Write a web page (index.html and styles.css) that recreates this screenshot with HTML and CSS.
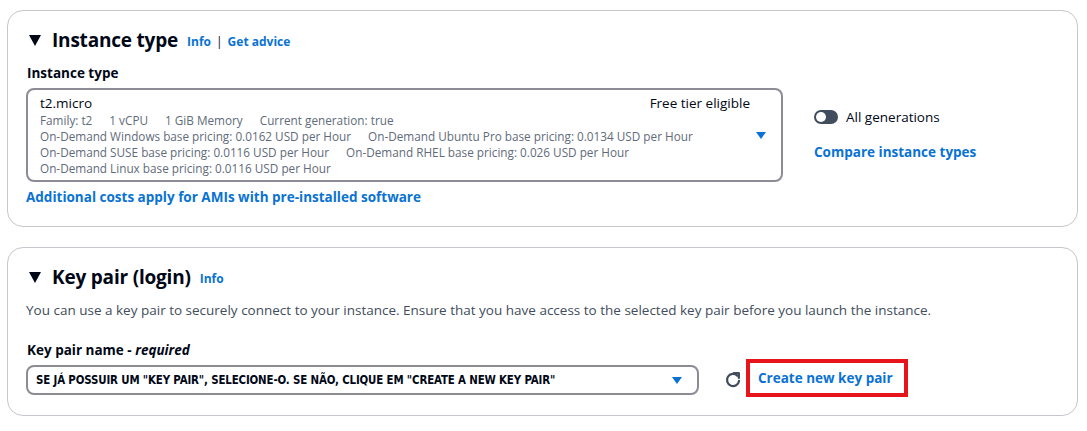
FILE: index.html
```html
<!DOCTYPE html>
<html>
<head>
<meta charset="utf-8">
<link rel="stylesheet" href="styles.css">
</head>
<body>
<section class="card card-first">
  <div class="head">
    <span class="tri"></span>
    <h2 class="title">Instance type</h2>
    <span class="links"><a class="info">Info</a><span class="sep">|</span><a class="info">Get advice</a></span>
  </div>
  <div class="label">Instance type</div>
  <div class="row-top">
    <div class="select big">
      <div class="sel-main">
        <div class="line1"><span>t2.micro</span><span class="free">Free tier eligible</span></div>
        <div class="sub"><span>Family: t2</span><span>1 vCPU</span><span>1 GiB Memory</span><span>Current generation: true</span></div>
        <div class="sub"><span>On-Demand Windows base pricing: 0.0162 USD per Hour</span><span>On-Demand Ubuntu Pro base pricing: 0.0134 USD per Hour</span></div>
        <div class="sub"><span>On-Demand SUSE base pricing: 0.0116 USD per Hour</span><span>On-Demand RHEL base pricing: 0.026 USD per Hour</span></div>
        <div class="sub"><span>On-Demand Linux base pricing: 0.0116 USD per Hour</span></div>
      </div>
      <span class="caret"></span>
    </div>
    <div class="side">
      <div class="toggle-row"><span class="toggle"><span class="knob"></span></span><span>All generations</span></div>
      <a class="link">Compare instance types</a>
    </div>
  </div>
  <a class="link extra">Additional costs apply for AMIs with pre-installed software</a>
</section>

<section class="card card-second">
  <div class="head">
    <span class="tri"></span>
    <h2 class="title">Key pair (login)</h2>
    <span class="links"><a class="info">Info</a></span>
  </div>
  <p class="desc">You can use a key pair to securely connect to your instance. Ensure that you have access to the selected key pair before you launch the instance.</p>
  <div class="label label2">Key pair name - <i>required</i></div>
  <div class="row-key">
    <div class="select small">
      <span class="sel-text">SE JÁ POSSUIR UM "KEY PAIR", SELECIONE-O. SE NÃO, CLIQUE EM "CREATE A NEW KEY PAIR"</span>
      <span class="caret"></span>
    </div>
    <svg class="refresh" width="18" height="18" viewBox="0 0 16 16"><path d="M13.4 8.8A5.4 5.4 0 1 1 11.8 4.1" fill="none" stroke="#414d5c" stroke-width="2" stroke-linecap="round"/><path d="M8.8 1.8 L13.2 1.8 L13.2 6.2" fill="none" stroke="#414d5c" stroke-width="2" stroke-linejoin="round" stroke-linecap="round"/></svg>
    <a class="link create">Create new key pair</a>
  </div>
</section>
</body>
</html>
```

FILE: styles.css
```css
* { box-sizing: border-box; }
body {
  margin: 0;
  padding: 10px 9px 0 7px;
  background: #ffffff;
  font-family: "Open Sans", "Noto Sans", sans-serif;
  color: #000716;
}
.card {
  border: 1px solid #c6c6cd;
  border-radius: 16px;
  padding: 19px 20px 19px 19px;
  background: #fff;
}
.card-second { margin-top: 20px; padding-bottom: 18px; }
.head {
  display: flex;
  align-items: center;
  height: 20px;
}
.tri {
  width: 0; height: 0;
  margin-left: 2px;
  border-left: 6.5px solid transparent;
  border-right: 6.5px solid transparent;
  border-top: 11px solid #000716;
}
.title {
  margin: 0 0 0 11px;
  font-size: 19px;
  font-weight: 700;
  line-height: 20px;
  letter-spacing: -0.2px;
}
.links {
  margin-left: 9px;
  font-size: 12px;
  font-weight: 700;
  display: flex;
  align-items: center;
  padding-top: 2px;
}
.info { color: #0972d3; }
.sep { margin: 0 5px; color: #000716; font-weight: 400; }
.label {
  margin-top: 14px;
  font-size: 13.5px;
  font-weight: 700;
  line-height: 18px;
}
.row-top {
  display: flex;
  align-items: flex-start;
  margin-top: 6px;
}
.select {
  border: 2px solid #8c8c94;
  border-radius: 8px;
  display: flex;
  align-items: center;
  margin-left: -1px;
}
.select.big {
  width: 757px;
  height: 94px;
  padding: 2px 15px 3px 12px;
}
.sel-main { flex: 1; }
.line1 {
  display: flex;
  justify-content: space-between;
  font-size: 13.5px;
  line-height: 18px;
  padding-right: 6px;
}
.sub {
  font-size: 11.75px;
  line-height: 16px;
  color: #5f6b7a;
  display: flex;
  gap: 0 17px;
}
.caret {
  width: 0; height: 0;
  border-left: 5.5px solid transparent;
  border-right: 5.5px solid transparent;
  border-top: 7px solid #0972d3;
}
.select.big .caret { margin-top: 2px; }
.side {
  margin-left: 31px;
  padding-top: 20px;
  display: flex;
  flex-direction: column;
}
.toggle-row {
  display: flex;
  align-items: center;
  font-size: 13.5px;
  line-height: 18px;
}
.toggle {
  width: 24px; height: 14px;
  border-radius: 7px;
  background: #414d5c;
  position: relative;
  margin-right: 8px;
}
.knob {
  position: absolute;
  left: 2px; top: 2px;
  width: 10px; height: 10px;
  border-radius: 50%;
  background: #fff;
}
.link {
  color: #0972d3;
  font-weight: 700;
  font-size: 13.5px;
  line-height: 20px;
  white-space: nowrap;
}
.side .link { margin-top: 16px; }
.extra { display: block; margin-top: 5px; margin-left: -1px; }
.desc {
  margin: 13px 0 0 0;
  font-size: 13.5px;
  line-height: 20px;
  color: #414d5c;
  margin-left: -1px;
}
.label2 { margin-top: 21px; }
.label2 i { font-weight: 700; }
.row-key {
  display: flex;
  align-items: flex-start;
  height: 38px;
}
.select.small {
  width: 673px;
  height: 30px;
  margin-top: 6px;
  padding: 0 15px 0 8px;
  justify-content: space-between;
}
.sel-text {
  font-family: "DejaVu Sans Condensed", "DejaVu Sans", sans-serif;
  font-weight: 700;
  font-size: 11.4px;
  letter-spacing: -0.15px;
}
.refresh { margin: 12px 0 0 25px; }
.create {
  margin-left: 4px;
  border: 4px solid #e8141c;
  height: 38px;
  padding: 5px 11px 0 8px;
  display: flex;
  align-items: flex-start;
}
```
